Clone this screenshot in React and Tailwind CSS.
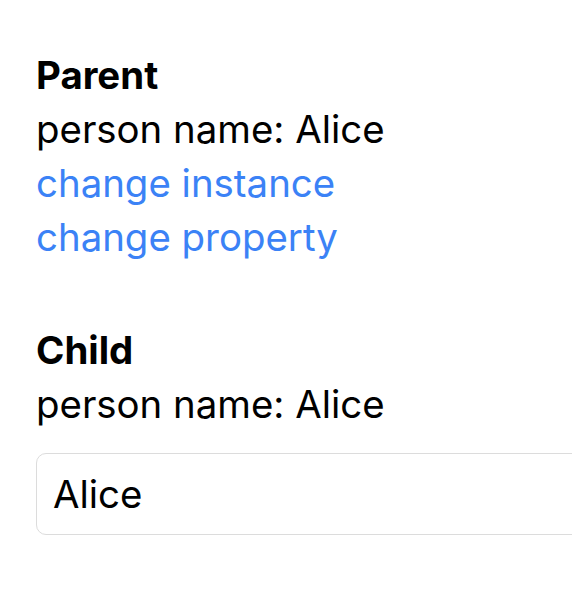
export default function App() {
  return (
    <div className="min-h-[600px] bg-white pl-9 pt-[48px] text-[38.4px] leading-[54px] text-black" style={{ fontFamily: 'Inter, "Noto Sans", sans-serif' }}>
      <div className="font-bold">Parent</div>
      <div>person name: Alice</div>
      <div className="text-[#3b82f6]">change instance</div>
      <div className="text-[#3b82f6]">change property</div>
      <div className="mt-[59px] font-bold">Child</div>
      <div>person name: Alice</div>
      <div className="mt-[22px] h-[82px] w-[560px] rounded-[10px] border border-[#dcdcdc] flex items-center pl-4">Alice</div>
    </div>
  );
}
